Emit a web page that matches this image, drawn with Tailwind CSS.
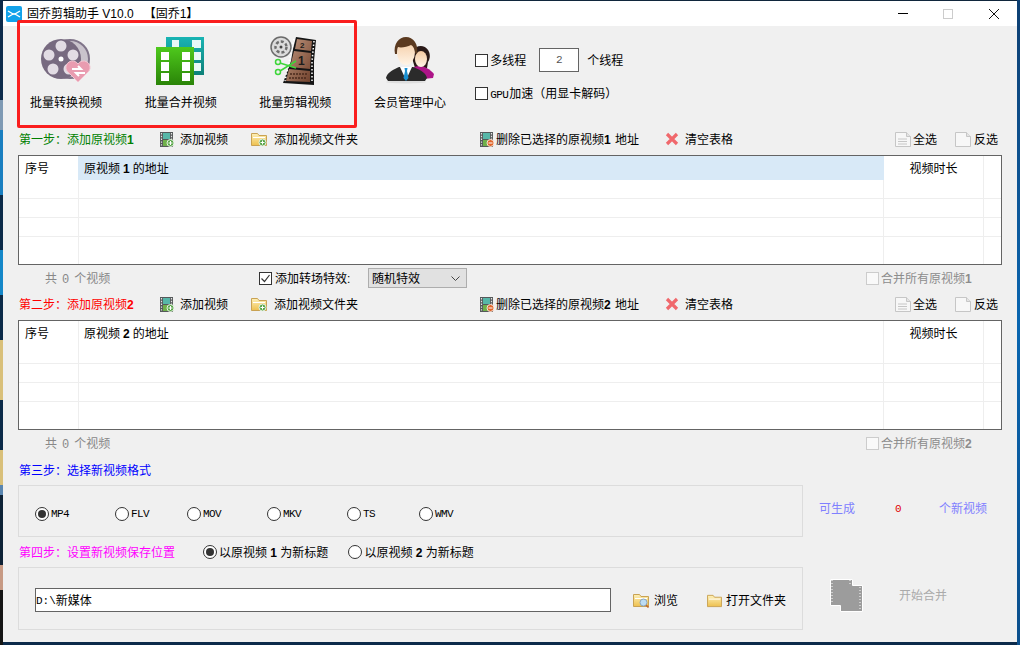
<!DOCTYPE html>
<html lang="zh-CN">

<head>
  <meta charset="UTF-8">
  <title>固乔剪辑助手</title>
  <script src="https://cdn.jsdelivr.net/npm/@tailwindcss/browser@4"></script>
</head>

<body class="relative w-[1020px] h-[645px] overflow-hidden bg-[#0c2a4a]">

  <!-- shared icons -->
  <svg class="absolute w-0 h-0">
    <defs>
      <linearGradient id="folderFill" x1="0" y1="0" x2="0" y2="1">
        <stop offset="0" stop-color="#fdf0b8" />
        <stop offset="1" stop-color="#eec04e" />
      </linearGradient>
      <linearGradient id="greenFill" x1="0" y1="0" x2="0" y2="1">
        <stop offset="0" stop-color="#4ec91c" />
        <stop offset="1" stop-color="#2a8408" />
      </linearGradient>
      <linearGradient id="tealFill" x1="0" y1="0" x2="0" y2="1">
        <stop offset="0" stop-color="#19b4b4" />
        <stop offset="1" stop-color="#0d8078" />
      </linearGradient>
      <linearGradient id="filmCell" x1="0" y1="0" x2="1" y2="1">
        <stop offset="0" stop-color="#c49a82" />
        <stop offset="1" stop-color="#6e3f2a" />
      </linearGradient>
      <linearGradient id="skin" x1="0" y1="0" x2="0" y2="1">
        <stop offset="0" stop-color="#f3c9a0" />
        <stop offset="1" stop-color="#fff4e6" />
      </linearGradient>
    </defs>
    <symbol id="film" viewBox="0 0 14 15">
      <rect x="0" y="0" width="13" height="15" fill="#55595a" />
      <rect x="3" y="1" width="7" height="6" fill="#57b7a8" />
      <rect x="3" y="8" width="7" height="6" fill="#6fb04a" />
      <path d="M1.500 1v13M11.500 1v13" stroke="#e6e6e6" stroke-width="1.200" stroke-dasharray="1.400 1.400" />
    </symbol>
    <symbol id="folder" viewBox="0 0 16 16">
      <path d="M0.500 2.500h6l1.500 2h7.500v10h-15z" fill="url(#folderFill)" stroke="#c9a253" />
      <path d="M2 6.500h12" stroke="#fff" />
    </symbol>
    <symbol id="page" viewBox="0 0 16 15">
      <path d="M0.500 0.500h11l4 4v10h-15z" fill="#f7f7f7" stroke="#c6c6c6" />
      <path d="M11.500 0.500v4h4" fill="#e4e4e4" stroke="#c6c6c6" />
    </symbol>
  </svg>

  <!-- bits of the desktop showing round the window -->
  <div class="absolute left-0 top-0 w-[3px] h-[645px] flex flex-col">
    <div class="h-[100px] bg-[#0c2a4a]"></div>
    <div class="h-[30px] bg-[#7f9ab4]"></div>
    <div class="h-[65px] bg-[#1a7fc0]"></div>
    <div class="h-[55px] bg-[#0b2a48]"></div>
    <div class="h-[45px] bg-[#1587c8]"></div>
    <div class="h-[45px] bg-[#0b2a48]"></div>
    <div class="h-[60px] bg-[#d9c07a]"></div>
    <div class="h-[50px] bg-[#0b2a48]"></div>
    <div class="h-[35px] bg-[#d9c07a]"></div>
    <div class="h-[10px] bg-[#5a86b0]"></div>
    <div class="h-[70px] bg-[#0e2236]"></div>
    <div class="h-[25px] bg-[#c79a84]"></div>
    <div class="h-[55px] bg-[#151515]"></div>
  </div>
  <div class="absolute right-0 top-0 w-[3px] h-[645px] bg-gradient-to-b from-[#0d3f72] via-[#0a66b0] to-[#0b4f8c]"></div>

  <!-- window -->
  <div class="absolute left-[3px] top-0 w-[1014px] h-[642px] flex flex-col border-t border-[#10263c] bg-[#f0f0f0] text-black text-[12px] leading-[14px] font-['Liberation_Sans','Noto_Sans_CJK_SC',sans-serif]">

    <!-- title bar -->
    <div class="h-[25px] shrink-0 bg-white flex items-center">
      <svg class="ml-[3px] w-[16px] h-[16px]" viewBox="0 0 16 16">
        <rect width="16" height="16" rx="2" fill="#12a2ea" />
        <path d="M2 5l5 3-5 3M14 5l-5 3 5 3" fill="none" stroke="#fff" stroke-width="1.400" />
        <path d="M6 8h4" stroke="#fff" stroke-width="1.400" />
      </svg>
      <span class="ml-[5px] whitespace-pre">固乔剪辑助手 V10.0   【固乔1】</span>
      <div class="ml-auto flex items-center">
        <div class="w-[10px] h-[1px] bg-black mr-[35px]"></div>
        <div class="w-[10px] h-[10px] border border-[#cccccc] mr-[36px]"></div>
        <svg class="w-[10px] h-[10px] mr-[18px]" viewBox="0 0 10 10">
          <path d="M0 0l10 10M10 0l-10 10" stroke="#111" />
        </svg>
      </div>
    </div>

    <!-- toolbar -->
    <div class="h-[102px] shrink-0 flex pl-[5.670px]">
      <div class="w-[114.670px] pt-[10px] flex flex-col items-center">
        <svg class="w-[50px] h-[50px]" viewBox="0 0 50 50">
          <circle cx="29" cy="23" r="19" fill="#c9c3cc" stroke="#80758a" stroke-width="2" />
          <circle cx="20" cy="23" r="20" fill="#776a80" />
          <g fill="#e2dce4">
            <circle cx="20" cy="10" r="5.500" />
            <circle cx="8" cy="19" r="5.500" />
            <circle cx="32" cy="19" r="5.500" />
            <circle cx="12" cy="33" r="5.500" />
            <circle cx="28" cy="33" r="5.500" />
          </g>
          <circle cx="20" cy="23" r="2.500" fill="#fff" />
          <path d="M37 46l-11-11a6.500 6.500 0 0 1 11-7a6.500 6.500 0 0 1 11 7z" fill="#e99cb0" stroke="#f3c4d0" />
          <path d="M31 33h9l-3-3M44 37h-9l3 3" fill="none" stroke="#fff" stroke-width="2" />
        </svg>
        <span class="mt-[10px]">批量转换视频</span>
      </div>
      <div class="w-[114.670px] pt-[10px] flex flex-col items-center">
        <svg class="w-[50px] h-[50px]" viewBox="0 0 50 50">
          <rect x="10" y="1" width="38" height="38" fill="url(#tealFill)" />
          <g fill="#e8f8f6">
            <rect x="16" y="4" width="7" height="8" />
            <rect x="36" y="4" width="9" height="8" />
            <rect x="36" y="16" width="9" height="8" />
            <rect x="36" y="27" width="9" height="8" />
          </g>
          <rect x="0" y="11" width="38" height="38" fill="url(#greenFill)" />
          <g fill="#fff">
            <rect x="5" y="16" width="8" height="8" />
            <rect x="26" y="16" width="8" height="8" />
            <rect x="5" y="26" width="8" height="9" />
            <rect x="26" y="26" width="8" height="9" />
            <rect x="5" y="37" width="8" height="8" />
            <rect x="26" y="37" width="8" height="8" />
          </g>
        </svg>
        <span class="mt-[10px]">批量合并视频</span>
      </div>
      <div class="w-[114.670px] pt-[10px] flex flex-col items-center">
        <svg class="w-[50px] h-[50px]" viewBox="0 0 50 50">
          <path d="M26 1l20 3-2 21v24l-31-2 8-22 2-12z" fill="#151515" />
          <path d="M27 3l15 2-1 10-16-2zM24 15l17 2-1 16-20-2zM19 33l21 2v11l-24-1z" fill="url(#filmCell)" />
          <path d="M24 3l-3 14-6 28" fill="none" stroke="#fff" stroke-width="1.500" stroke-dasharray="1.500 2" />
          <path d="M44 5l-2 20v22" fill="none" stroke="#fff" stroke-width="1.500" stroke-dasharray="1.500 2" />
          <text x="30" y="12" font-size="8" font-weight="700" fill="#1c1c1c">2</text>
          <text x="28" y="29" font-size="12" font-weight="700" fill="#1c1c1c">1</text>
          <path d="M20 38h17M19 42h18" stroke="#4a2a1c" stroke-width="1.500" stroke-dasharray="2 1" />
          <circle cx="11" cy="11" r="10" fill="#dcdcdc" stroke="#6b6b6b" stroke-width="1.500" />
          <circle cx="11" cy="11" r="5.500" fill="none" stroke="#6e6e6e" stroke-width="2.500" stroke-dasharray="3 2" />
          <circle cx="11" cy="11" r="1.500" fill="#444" />
          <g fill="none" stroke="#3ed63a" stroke-width="1.500">
            <circle cx="8" cy="26" r="2.500" />
            <circle cx="8" cy="36" r="2.500" />
            <path d="M10 27l16 5M10 35l16-10" />
          </g>
        </svg>
        <span class="mt-[10px]">批量剪辑视频</span>
      </div>
      <div class="w-[114.670px] pt-[10px] flex flex-col items-center">
        <svg class="w-[50px] h-[50px]" viewBox="0 0 50 50">
          <ellipse cx="21" cy="46" rx="20" ry="1.500" fill="#dedede" />
          <path d="M27 22a9 10 0 1 1 16 4l-1 6h-12z" fill="#2a1a18" />
          <path d="M24 35c4-4 7-5 11-5s10 3 14 8l-1 4-20 2z" fill="#ad1488" />
          <ellipse cx="36" cy="23" rx="6" ry="8" fill="url(#skin)" />
          <path d="M1 42c1-6 9-9 13-11h14c5 2 13 5 14 11l-2 3H3z" fill="#2b2b2b" />
          <path d="M15 31h12l-6 13z" fill="#fff" />
          <path d="M19.500 32h3l-.5 3 1.500 7-2.500 3-2.500-3 1.500-7z" fill="#1a8fd0" />
          <ellipse cx="21" cy="16" rx="9" ry="13" fill="url(#skin)" />
          <path d="M10 18c-2-10 4-17 11-17s13 7 11 17l-2-1c0-4-2-7-4-8-4 2-10 3-13 2-1 2-1 4-1 7z" fill="#5b3a20" />
        </svg>
        <span class="mt-[10px]">会员管理中心</span>
      </div>
      <div class="ml-[8px] pt-[22px] flex flex-col gap-[9px]">
        <div class="h-[24px] flex items-center [&>span]:pt-[2px]">
          <div class="w-[13px] h-[13px] border border-[#333333] bg-white"></div>
          <span class="ml-[2px]">多线程</span>
          <input class="ml-[13px] w-[40px] h-[24px] border border-[#646464] bg-white text-center text-[11px] text-[#555555] font-['Liberation_Mono',monospace]" value="2" readonly>
          <span class="ml-[8px]">个线程</span>
        </div>
        <div class="h-[24px] flex items-center [&>span]:pt-[2px]">
          <div class="w-[13px] h-[13px] border border-[#333333] bg-white"></div>
          <span class="ml-[2px]"><span class="inline-block w-[19px] text-[11px] tracking-[-0.600px] font-['Liberation_Mono',monospace]">GPU</span>加速（用显卡解码）</span>
        </div>
      </div>
    </div>

    <!-- step 1 -->
    <div class="h-[22px] shrink-0 flex items-center pl-[16px] [&>span]:pt-[2px]">
      <div class="w-[141px] pt-[2px] text-[#008000]">第一步：添加原视频<b>1</b></div>
      <svg class="w-[14px] h-[15px]"><use href="#film" />
        <circle cx="10.500" cy="11" r="3.500" fill="#5aa64a" stroke="#e8f3e4" />
        <path d="M8.500 11h4M10.500 9v4" stroke="#fff" />
      </svg>
      <span class="ml-[6px]">添加视频</span>
      <svg class="ml-[23px] w-[16px] h-[16px]"><use href="#folder" />
        <circle cx="11.500" cy="11.500" r="3.500" fill="#5aa64a" stroke="#e8f3e4" />
        <path d="M9.500 11.500h4M11.500 9.500v4" stroke="#fff" />
      </svg>
      <span class="ml-[7px]">添加视频文件夹</span>
      <svg class="ml-[122px] w-[14px] h-[15px]"><use href="#film" />
        <circle cx="10.500" cy="11" r="3.500" fill="#e0662c" stroke="#f8e2d6" />
        <path d="M8.500 11h4" stroke="#fff" />
      </svg>
      <span class="ml-[2px] w-[144px] whitespace-nowrap">删除已选择的原视频<b class="mr-[1px]">1</b> 地址</span>
      <svg class="ml-[25px] w-[14px] h-[14px]" viewBox="0 0 14 14">
        <path d="M2 2l10 10M12 2L2 12" stroke="#f0686c" stroke-width="3.200" />
      </svg>
      <span class="ml-[6px]">清空表格</span>
      <svg class="ml-[162px] w-[16px] h-[15px]"><use href="#page" />
        <path d="M3 7h9M3 9.500h9M3 12h9" stroke="#c6c6c6" />
      </svg>
      <span class="ml-[2px]">全选</span>
      <svg class="ml-[18px] w-[16px] h-[15px]"><use href="#page" /></svg>
      <span class="ml-[3px]">反选</span>
    </div>

    <div class="mt-[5px] ml-[15px] w-[984px] h-[110px] shrink-0 border border-[#646464] bg-white overflow-hidden">
      <div class="h-[24px] flex items-center">
        <div class="w-[59px] pl-[6px] pt-[2px]">序号</div>
        <div class="w-[806px] h-full flex items-center pl-[6px] pt-[2px] bg-[#d8e9f7]">原视频 <b class="mx-[3px]">1</b> 的地址</div>
        <div class="w-[100px] h-full flex items-center justify-center pt-[2px] border-r border-[#eeeeee]">视频时长</div>
      </div>
      <div class="h-[19px] flex border-b border-[#eeeeee]">
        <div class="w-[60px] border-r border-[#eeeeee]"></div>
        <div class="w-[805px] border-r border-[#eeeeee]"></div>
        <div class="w-[100px] border-r border-[#eeeeee]"></div>
      </div>
      <div class="h-[19px] flex border-b border-[#eeeeee]">
        <div class="w-[60px] border-r border-[#eeeeee]"></div>
        <div class="w-[805px] border-r border-[#eeeeee]"></div>
        <div class="w-[100px] border-r border-[#eeeeee]"></div>
      </div>
      <div class="h-[19px] flex border-b border-[#eeeeee]">
        <div class="w-[60px] border-r border-[#eeeeee]"></div>
        <div class="w-[805px] border-r border-[#eeeeee]"></div>
        <div class="w-[100px] border-r border-[#eeeeee]"></div>
      </div>
      <div class="h-[27px] flex">
        <div class="w-[60px] border-r border-[#eeeeee]"></div>
        <div class="w-[805px] border-r border-[#eeeeee]"></div>
        <div class="w-[100px] border-r border-[#eeeeee]"></div>
      </div>
    </div>

    <div class="h-[26px] shrink-0 flex items-center [&>span]:pt-[2px]">
      <div class="ml-[42px] w-[214px] pt-[3px] text-[#888888]">共<span class="mx-[5px] font-['Liberation_Mono',monospace]">0</span>个视频</div>
      <div class="w-[13px] h-[13px] border border-[#333333] bg-white">
        <svg class="w-[11px] h-[11px]" viewBox="0 0 11 11">
          <path d="M1.500 5.500l3 3 5-6.500" fill="none" stroke="#333" stroke-width="1.200" />
        </svg>
      </div>
      <span class="ml-[3px] w-[78px] whitespace-nowrap">添加转场特效:</span>
      <div class="ml-[15px] w-[99px] h-[20px] flex items-center pl-[3px] bg-[#e1e1e1] border border-[#adadad]">
        <span class="pt-[2px]">随机特效</span>
        <svg class="ml-auto mr-[6px] w-[9px] h-[5px]" viewBox="0 0 9 5">
          <path d="M0.500 0.500l4 4 4-4" fill="none" stroke="#444" />
        </svg>
      </div>
      <div class="ml-auto w-[13px] h-[13px] border border-[#cccccc] bg-white/60"></div>
      <span class="ml-[2px] mr-[43px] w-[93px] whitespace-nowrap text-[#8c8c8c]">合并所有原视频<b>1</b></span>
    </div>

    <!-- step 2 -->
    <div class="mt-[2px] h-[22px] shrink-0 flex items-center pl-[16px] [&>span]:pt-[2px]">
      <div class="w-[141px] pt-[2px] text-[#ff0000]">第二步：添加原视频<b>2</b></div>
      <svg class="w-[14px] h-[15px]"><use href="#film" />
        <circle cx="10.500" cy="11" r="3.500" fill="#5aa64a" stroke="#e8f3e4" />
        <path d="M8.500 11h4M10.500 9v4" stroke="#fff" />
      </svg>
      <span class="ml-[6px]">添加视频</span>
      <svg class="ml-[23px] w-[16px] h-[16px]"><use href="#folder" />
        <circle cx="11.500" cy="11.500" r="3.500" fill="#5aa64a" stroke="#e8f3e4" />
        <path d="M9.500 11.500h4M11.500 9.500v4" stroke="#fff" />
      </svg>
      <span class="ml-[7px]">添加视频文件夹</span>
      <svg class="ml-[122px] w-[14px] h-[15px]"><use href="#film" />
        <circle cx="10.500" cy="11" r="3.500" fill="#e0662c" stroke="#f8e2d6" />
        <path d="M8.500 11h4" stroke="#fff" />
      </svg>
      <span class="ml-[2px] w-[144px] whitespace-nowrap">删除已选择的原视频<b class="mr-[1px]">2</b> 地址</span>
      <svg class="ml-[25px] w-[14px] h-[14px]" viewBox="0 0 14 14">
        <path d="M2 2l10 10M12 2L2 12" stroke="#f0686c" stroke-width="3.200" />
      </svg>
      <span class="ml-[6px]">清空表格</span>
      <svg class="ml-[162px] w-[16px] h-[15px]"><use href="#page" />
        <path d="M3 7h9M3 9.500h9M3 12h9" stroke="#c6c6c6" />
      </svg>
      <span class="ml-[2px]">全选</span>
      <svg class="ml-[18px] w-[16px] h-[15px]"><use href="#page" /></svg>
      <span class="ml-[3px]">反选</span>
    </div>

    <div class="mt-[5px] ml-[15px] w-[984px] h-[110px] shrink-0 border border-[#646464] bg-white overflow-hidden">
      <div class="h-[24px] flex items-center">
        <div class="w-[60px] h-full flex items-center pl-[6px] pt-[2px] border-r border-[#eeeeee]">序号</div>
        <div class="w-[805px] h-full flex items-center pl-[5px] pt-[2px] border-r border-[#eeeeee]">原视频 <b class="mx-[3px]">2</b> 的地址</div>
        <div class="w-[100px] h-full flex items-center justify-center pt-[2px] border-r border-[#eeeeee]">视频时长</div>
      </div>
      <div class="h-[19px] flex border-b border-[#eeeeee]">
        <div class="w-[60px] border-r border-[#eeeeee]"></div>
        <div class="w-[805px] border-r border-[#eeeeee]"></div>
        <div class="w-[100px] border-r border-[#eeeeee]"></div>
      </div>
      <div class="h-[19px] flex border-b border-[#eeeeee]">
        <div class="w-[60px] border-r border-[#eeeeee]"></div>
        <div class="w-[805px] border-r border-[#eeeeee]"></div>
        <div class="w-[100px] border-r border-[#eeeeee]"></div>
      </div>
      <div class="h-[19px] flex border-b border-[#eeeeee]">
        <div class="w-[60px] border-r border-[#eeeeee]"></div>
        <div class="w-[805px] border-r border-[#eeeeee]"></div>
        <div class="w-[100px] border-r border-[#eeeeee]"></div>
      </div>
      <div class="h-[27px] flex">
        <div class="w-[60px] border-r border-[#eeeeee]"></div>
        <div class="w-[805px] border-r border-[#eeeeee]"></div>
        <div class="w-[100px] border-r border-[#eeeeee]"></div>
      </div>
    </div>

    <div class="h-[26px] shrink-0 flex items-center [&>span]:pt-[2px]">
      <div class="ml-[42px] pt-[3px] text-[#888888]">共<span class="mx-[5px] font-['Liberation_Mono',monospace]">0</span>个视频</div>
      <div class="ml-auto w-[13px] h-[13px] border border-[#cccccc] bg-white/60"></div>
      <span class="ml-[2px] mr-[43px] w-[93px] whitespace-nowrap text-[#8c8c8c]">合并所有原视频<b>2</b></span>
    </div>

    <!-- step 3 -->
    <div class="mt-[3px] h-[22px] shrink-0 flex items-center pl-[16px] pt-[2px] text-[#0000ff]">第三步：选择新视频格式</div>

    <div class="mt-[4px] ml-[15px] h-[52px] shrink-0 flex items-center">
      <div class="w-[785px] h-full pt-[5px] pl-[16px] flex items-center border border-[#dcdcdc] text-[11px] tracking-[-0.600px] font-['Liberation_Mono',monospace]">
        <div class="w-[80px] flex items-center">
          <div class="w-[14px] h-[14px] rounded-full border border-[#333333] bg-white flex items-center justify-center">
            <div class="w-[8px] h-[8px] rounded-full bg-[#333333]"></div>
          </div>
          <span class="ml-[2px]">MP4</span>
        </div>
        <div class="w-[72px] flex items-center">
          <div class="w-[14px] h-[14px] rounded-full border border-[#333333] bg-white"></div>
          <span class="ml-[2px]">FLV</span>
        </div>
        <div class="w-[80px] flex items-center">
          <div class="w-[14px] h-[14px] rounded-full border border-[#333333] bg-white"></div>
          <span class="ml-[2px]">MOV</span>
        </div>
        <div class="w-[80px] flex items-center">
          <div class="w-[14px] h-[14px] rounded-full border border-[#333333] bg-white"></div>
          <span class="ml-[2px]">MKV</span>
        </div>
        <div class="w-[72px] flex items-center">
          <div class="w-[14px] h-[14px] rounded-full border border-[#333333] bg-white"></div>
          <span class="ml-[2px]">TS</span>
        </div>
        <div class="flex items-center">
          <div class="w-[14px] h-[14px] rounded-full border border-[#333333] bg-white"></div>
          <span class="ml-[2px]">WMV</span>
        </div>
      </div>
      <span class="ml-[16px] -mt-[4px] text-[#8080ff]">可生成</span>
      <span class="ml-[40px] -mt-[4px] w-[6px] text-[11px] text-[#e00000] font-['Liberation_Mono',monospace]">0</span>
      <span class="ml-[38px] -mt-[4px] text-[#8080ff]">个新视频</span>
    </div>

    <!-- step 4 -->
    <div class="mt-[4px] h-[22px] shrink-0 flex items-center pl-[16px] [&>span]:pt-[2px]">
      <div class="w-[184px] pt-[2px] text-[#ff00ff]">第四步：设置新视频保存位置</div>
      <div class="w-[14px] h-[14px] rounded-full border border-[#333333] bg-white flex items-center justify-center">
        <div class="w-[8px] h-[8px] rounded-full bg-[#333333]"></div>
      </div>
      <span class="ml-[2px]">以原视频 <b>1</b> 为新标题</span>
      <div class="ml-[20px] w-[14px] h-[14px] rounded-full border border-[#333333] bg-white"></div>
      <span class="ml-[2px]">以原视频 <b>2</b> 为新标题</span>
    </div>

    <div class="mt-[4px] ml-[15px] h-[63px] shrink-0 flex items-center">
      <div class="w-[785px] h-full pt-[3px] pl-[16px] flex items-center border border-[#dcdcdc] [&>span]:pt-[2px]">
        <div class="w-[576px] h-[24px] flex items-center pt-[2px] border border-[#646464] bg-white"><span class="font-['Liberation_Mono',monospace] text-[11px]">D:\</span>新媒体</div>
        <svg class="ml-[22px] w-[16px] h-[16px]"><use href="#folder" />
          <circle cx="10.500" cy="10.500" r="3.500" fill="#bcdcf4" stroke="#8aa6c0" />
          <path d="M13 13l2.500 2.500" stroke="#c0692c" stroke-width="1.600" />
        </svg>
        <span class="ml-[5px]">浏览</span>
        <svg class="ml-[29px] w-[15px] h-[15px]"><use href="#folder" /></svg>
        <span class="ml-[4px]">打开文件夹</span>
      </div>
      <svg class="ml-[27px] -mt-[7px] w-[33px] h-[33px]" viewBox="0 0 33 33">
        <path d="M0.500 0.500h22v6h10v26h-22v-6h-10z" fill="#9c9c9c" stroke="#fff" />
        <path d="M20 1v5M30 8v23M2 1v24" stroke="#fff" stroke-dasharray="1 2" />
      </svg>
      <span class="ml-[36px] -mt-[5px] text-[#aaaaaa]">开始合并</span>
    </div>

    <!-- red annotation round the batch buttons -->
    <div class="absolute left-[14px] top-[19px] w-[340px] h-[108px] border-[3px] border-[#fa1e1e] rounded-[2px]"></div>
  </div>
</body>

</html>
